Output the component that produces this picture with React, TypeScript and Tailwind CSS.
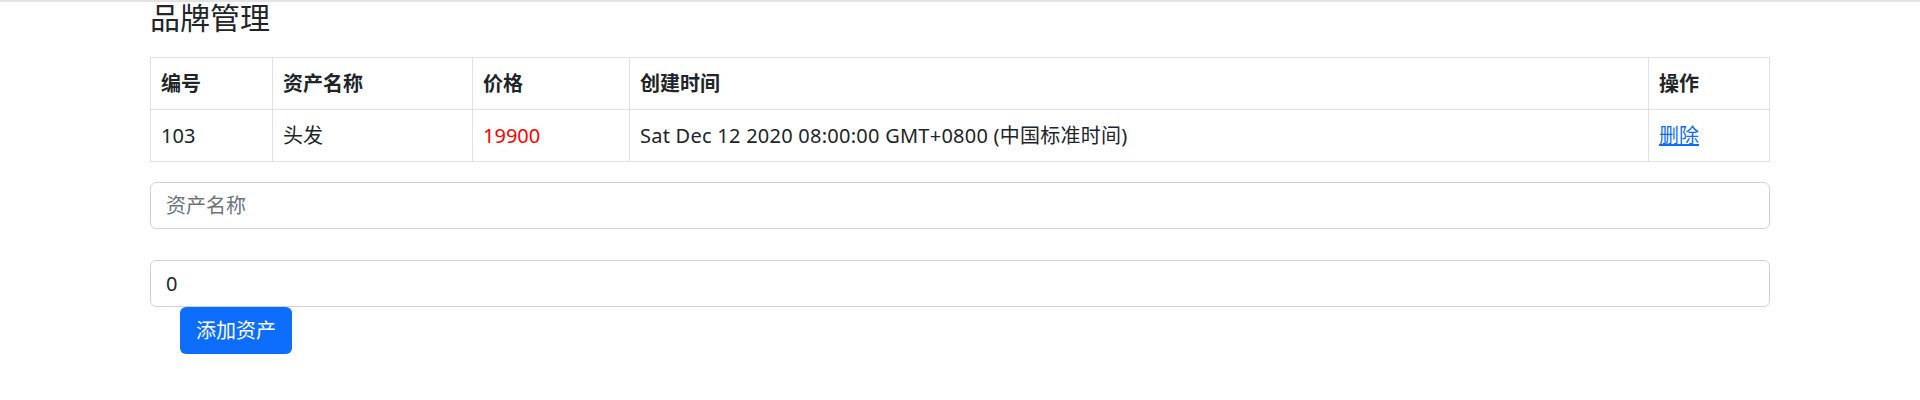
import React from 'react';

const rows = [
  { id: 103, name: '头发', price: 19900, time: 'Sat Dec 12 2020 08:00:00 GMT+0800 (中国标准时间)' },
];

const font = { fontFamily: '"Segoe UI", "Noto Sans", "Noto Sans CJK SC", sans-serif' };

export default function App() {
  return (
    <div className="min-h-[400px] bg-white border-t-2 border-[#e3e3e3] text-[#212529]" style={font}>
      <div className="w-[1620px] mx-auto">
        <h4 className="text-[30px] leading-[36px] font-normal mt-[-2px] mb-[21px]">品牌管理</h4>
        <table className="w-full table-fixed border-collapse text-[20px] leading-[31px]">
          <colgroup>
            <col className="w-[122px]" />
            <col className="w-[200px]" />
            <col className="w-[157px]" />
            <col />
            <col className="w-[121px]" />
          </colgroup>
          <thead>
            <tr>
              <th className="border border-[#dee2e6] px-[10px] py-[10px] text-left font-bold">编号</th>
              <th className="border border-[#dee2e6] px-[10px] py-[10px] text-left font-bold">资产名称</th>
              <th className="border border-[#dee2e6] px-[10px] py-[10px] text-left font-bold">价格</th>
              <th className="border border-[#dee2e6] px-[10px] py-[10px] text-left font-bold">创建时间</th>
              <th className="border border-[#dee2e6] px-[10px] py-[10px] text-left font-bold">操作</th>
            </tr>
          </thead>
          <tbody>
            {rows.map((r) => (
              <tr key={r.id}>
                <td className="border border-[#dee2e6] px-[10px] py-[10px]">{r.id}</td>
                <td className="border border-[#dee2e6] px-[10px] py-[10px]">{r.name}</td>
                <td className="border border-[#dee2e6] px-[10px] py-[10px] text-[#ff0000]">{r.price}</td>
                <td className="border border-[#dee2e6] px-[10px] py-[10px] tracking-[0.25px]">{r.time}</td>
                <td className="border border-[#dee2e6] px-[10px] py-[10px]">
                  <a href="#" className="text-[#0d6efd] underline">删除</a>
                </td>
              </tr>
            ))}
          </tbody>
        </table>
        <input
          className="block w-full mt-[20px] h-[47px] px-[15px] border border-[#ced4da] rounded-[6px] text-[20px] placeholder:text-[#6c757d] outline-none"
          placeholder="资产名称"
          style={font}
        />
        <div className="h-[31px]" />
        <input
          className="block w-full h-[47px] px-[15px] border border-[#ced4da] rounded-[6px] text-[20px] outline-none"
          defaultValue="0"
          style={font}
        />
        <button
          className="ml-[30px] h-[47px] px-[16px] bg-[#0d6efd] text-white text-[20px] rounded-[6px]"
          style={font}
        >
          添加资产
        </button>
      </div>
    </div>
  );
}
